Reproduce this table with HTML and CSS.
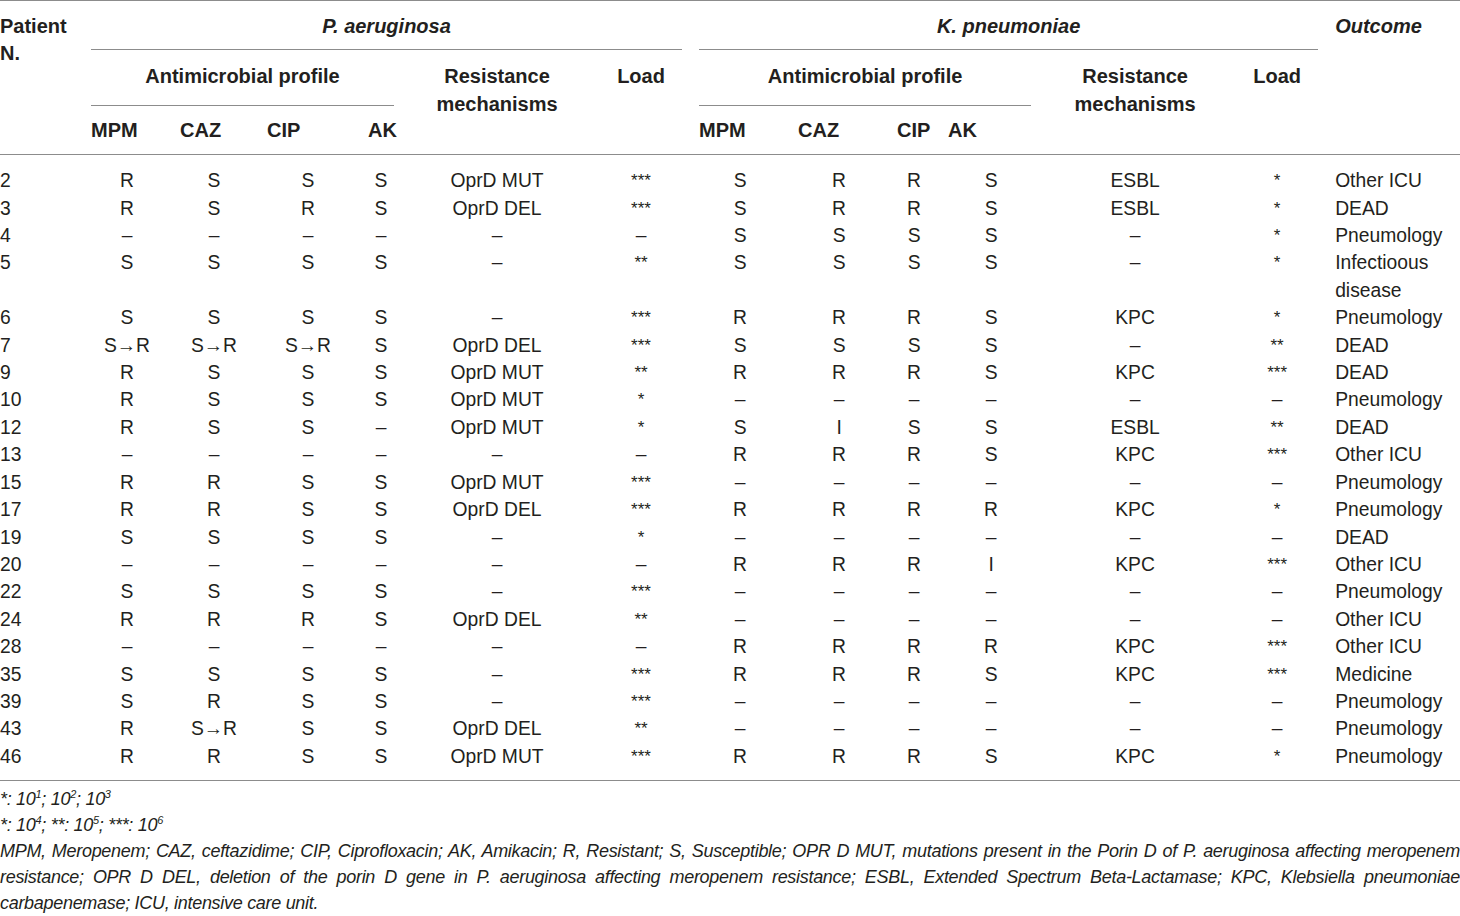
FILE: index.html
```html
<!DOCTYPE html>
<html lang="en">
<head>
    <meta charset="UTF-8">
    <meta name="viewport" content="width=device-width, initial-scale=1.0">
    <title>Patient isolates</title>
    <link rel="stylesheet" href="styles.css">
</head>
<body>
    <table class="results">
        <colgroup>
            <col class="c-pat">
            <col class="c-p-mpm"><col class="c-p-caz"><col class="c-p-cip"><col class="c-p-ak">
            <col class="c-p-res"><col class="c-p-load">
            <col class="c-k-mpm"><col class="c-k-caz"><col class="c-k-cip"><col class="c-k-ak">
            <col class="c-k-res"><col class="c-k-load">
            <col class="c-out">
        </colgroup>
        <thead>
            <tr class="top">
                <th rowspan="3" class="pat">Patient<br>N.</th>
                <th colspan="6" class="group"><div class="rule">P. aeruginosa</div></th>
                <th colspan="6" class="group"><div class="rule">K. pneumoniae</div></th>
                <th rowspan="3" class="out">Outcome</th>
            </tr>
            <tr class="mid">
                <th colspan="4" class="profile p"><div class="rule">Antimicrobial profile</div></th>
                <th rowspan="2" class="span">Resistance<br>mechanisms</th>
                <th rowspan="2" class="span">Load</th>
                <th colspan="4" class="profile k"><div class="rule">Antimicrobial profile</div></th>
                <th rowspan="2" class="span">Resistance<br>mechanisms</th>
                <th rowspan="2" class="span">Load</th>
            </tr>
            <tr class="sub">
                <th>MPM</th><th class="caz">CAZ</th><th class="cip">CIP</th><th class="ak">AK</th>
                <th>MPM</th><th class="caz">CAZ</th><th>CIP</th><th class="ak">AK</th>
            </tr>
        </thead>
        <tbody>
            <tr><td class="pat">2</td><td>R</td><td>S</td><td>S</td><td>S</td><td>OprD MUT</td><td class="load">***</td><td>S</td><td>R</td><td>R</td><td>S</td><td>ESBL</td><td class="load">*</td><td class="out">Other ICU</td></tr>
            <tr><td class="pat">3</td><td>R</td><td>S</td><td>R</td><td>S</td><td>OprD DEL</td><td class="load">***</td><td>S</td><td>R</td><td>R</td><td>S</td><td>ESBL</td><td class="load">*</td><td class="out">DEAD</td></tr>
            <tr><td class="pat">4</td><td>–</td><td>–</td><td>–</td><td>–</td><td>–</td><td>–</td><td>S</td><td>S</td><td>S</td><td>S</td><td>–</td><td class="load">*</td><td class="out">Pneumology</td></tr>
            <tr><td class="pat">5</td><td>S</td><td>S</td><td>S</td><td>S</td><td>–</td><td class="load">**</td><td>S</td><td>S</td><td>S</td><td>S</td><td>–</td><td class="load">*</td><td class="out">Infectioous disease</td></tr>
            <tr><td class="pat">6</td><td>S</td><td>S</td><td>S</td><td>S</td><td>–</td><td class="load">***</td><td>R</td><td>R</td><td>R</td><td>S</td><td>KPC</td><td class="load">*</td><td class="out">Pneumology</td></tr>
            <tr><td class="pat">7</td><td>S→R</td><td>S→R</td><td>S→R</td><td>S</td><td>OprD DEL</td><td class="load">***</td><td>S</td><td>S</td><td>S</td><td>S</td><td>–</td><td class="load">**</td><td class="out">DEAD</td></tr>
            <tr><td class="pat">9</td><td>R</td><td>S</td><td>S</td><td>S</td><td>OprD MUT</td><td class="load">**</td><td>R</td><td>R</td><td>R</td><td>S</td><td>KPC</td><td class="load">***</td><td class="out">DEAD</td></tr>
            <tr><td class="pat">10</td><td>R</td><td>S</td><td>S</td><td>S</td><td>OprD MUT</td><td class="load">*</td><td>–</td><td>–</td><td>–</td><td>–</td><td>–</td><td>–</td><td class="out">Pneumology</td></tr>
            <tr><td class="pat">12</td><td>R</td><td>S</td><td>S</td><td>–</td><td>OprD MUT</td><td class="load">*</td><td>S</td><td>I</td><td>S</td><td>S</td><td>ESBL</td><td class="load">**</td><td class="out">DEAD</td></tr>
            <tr><td class="pat">13</td><td>–</td><td>–</td><td>–</td><td>–</td><td>–</td><td>–</td><td>R</td><td>R</td><td>R</td><td>S</td><td>KPC</td><td class="load">***</td><td class="out">Other ICU</td></tr>
            <tr><td class="pat">15</td><td>R</td><td>R</td><td>S</td><td>S</td><td>OprD MUT</td><td class="load">***</td><td>–</td><td>–</td><td>–</td><td>–</td><td>–</td><td>–</td><td class="out">Pneumology</td></tr>
            <tr><td class="pat">17</td><td>R</td><td>R</td><td>S</td><td>S</td><td>OprD DEL</td><td class="load">***</td><td>R</td><td>R</td><td>R</td><td>R</td><td>KPC</td><td class="load">*</td><td class="out">Pneumology</td></tr>
            <tr><td class="pat">19</td><td>S</td><td>S</td><td>S</td><td>S</td><td>–</td><td class="load">*</td><td>–</td><td>–</td><td>–</td><td>–</td><td>–</td><td>–</td><td class="out">DEAD</td></tr>
            <tr><td class="pat">20</td><td>–</td><td>–</td><td>–</td><td>–</td><td>–</td><td>–</td><td>R</td><td>R</td><td>R</td><td>I</td><td>KPC</td><td class="load">***</td><td class="out">Other ICU</td></tr>
            <tr><td class="pat">22</td><td>S</td><td>S</td><td>S</td><td>S</td><td>–</td><td class="load">***</td><td>–</td><td>–</td><td>–</td><td>–</td><td>–</td><td>–</td><td class="out">Pneumology</td></tr>
            <tr><td class="pat">24</td><td>R</td><td>R</td><td>R</td><td>S</td><td>OprD DEL</td><td class="load">**</td><td>–</td><td>–</td><td>–</td><td>–</td><td>–</td><td>–</td><td class="out">Other ICU</td></tr>
            <tr><td class="pat">28</td><td>–</td><td>–</td><td>–</td><td>–</td><td>–</td><td>–</td><td>R</td><td>R</td><td>R</td><td>R</td><td>KPC</td><td class="load">***</td><td class="out">Other ICU</td></tr>
            <tr><td class="pat">35</td><td>S</td><td>S</td><td>S</td><td>S</td><td>–</td><td class="load">***</td><td>R</td><td>R</td><td>R</td><td>S</td><td>KPC</td><td class="load">***</td><td class="out">Medicine</td></tr>
            <tr><td class="pat">39</td><td>S</td><td>R</td><td>S</td><td>S</td><td>–</td><td class="load">***</td><td>–</td><td>–</td><td>–</td><td>–</td><td>–</td><td>–</td><td class="out">Pneumology</td></tr>
            <tr><td class="pat">43</td><td>R</td><td>S→R</td><td>S</td><td>S</td><td>OprD DEL</td><td class="load">**</td><td>–</td><td>–</td><td>–</td><td>–</td><td>–</td><td>–</td><td class="out">Pneumology</td></tr>
            <tr><td class="pat">46</td><td>R</td><td>R</td><td>S</td><td>S</td><td>OprD MUT</td><td class="load">***</td><td>R</td><td>R</td><td>R</td><td>S</td><td>KPC</td><td class="load">*</td><td class="out">Pneumology</td></tr>
        </tbody>
    </table>

    <div class="notes">
        <p>*: 10<sup>1</sup>; 10<sup>2</sup>; 10<sup>3</sup></p>
        <p>*: 10<sup>4</sup>; **: 10<sup>5</sup>; ***: 10<sup>6</sup></p>
        <p class="abbr">MPM, Meropenem; CAZ, ceftazidime; CIP, Ciprofloxacin; AK, Amikacin; R, Resistant; S, Susceptible; OPR D MUT, mutations present in the Porin D of P. aeruginosa affecting meropenem resistance; OPR D DEL, deletion of the porin D gene in P. aeruginosa affecting meropenem resistance; ESBL, Extended Spectrum Beta-Lactamase; KPC, Klebsiella pneumoniae carbapenemase; ICU, intensive care unit.</p>
    </div>
</body>
</html>
```

FILE: styles.css
```css
body {
    margin: 0;
    font-family: "Liberation Sans", Arial, sans-serif;
    color: #231f20;
    background-color: #fff;
}
.results {
    width: 1460px;
    table-layout: fixed;
    border-collapse: collapse;
    border-top: 1px solid #8c8c8c;
}
.results thead,
.results tbody {
    border-bottom: 1px solid #8c8c8c;
}
.c-pat { width: 91px; }
.c-p-mpm { width: 72px; }
.c-p-caz { width: 102px; }
.c-p-cip { width: 86px; }
.c-p-ak { width: 60px; }
.c-p-res { width: 172px; }
.c-p-load { width: 116px; }
.c-k-mpm { width: 82px; }
.c-k-caz { width: 116px; }
.c-k-cip { width: 34px; }
.c-k-ak { width: 120px; }
.c-k-res { width: 168px; }
.c-k-load { width: 116px; }
.c-out { width: 125px; }

th {
    padding: 0;
    font-size: 20px;
    font-weight: bold;
    line-height: 27.4px;
    text-align: left;
    vertical-align: top;
}
.rule {
    border-bottom: 1px solid #8c8c8c;
    text-align: center;
}
.top .pat,
.top .out {
    padding-top: 12px;
}
.top .out {
    font-style: italic;
}
.group {
    padding-right: 17px;
    font-style: italic;
}
.group .rule {
    padding: 12px 0 9px;
}
.profile.p {
    padding-right: 17px;
}
.profile.k {
    padding-right: 20px;
}
.profile .rule {
    padding: 13px 0 14px;
}
.mid .span {
    padding-top: 13px;
    text-align: center;
}
.sub th {
    padding: 11px 0 10px;
}
.sub .caz,
.sub .ak {
    padding-left: 17px;
}
.sub .cip {
    padding-left: 2px;
}

td {
    padding: 0;
    font-size: 19.3px;
    line-height: 27.4px;
    text-align: center;
    vertical-align: top;
}
td.pat,
td.out {
    text-align: left;
}
td.load {
    font-size: 17px;
}
tbody tr:first-child td {
    padding-top: 12px;
}
tbody tr:last-child td {
    padding-bottom: 10px;
}

.notes {
    padding-top: 5px;
    font-size: 18px;
    font-style: italic;
    letter-spacing: -0.3px;
    line-height: 26px;
}
.notes p {
    margin: 0;
}
.notes .abbr {
    text-align: justify;
}
.notes sup {
    font-size: 11px;
    line-height: 0;
}
```
